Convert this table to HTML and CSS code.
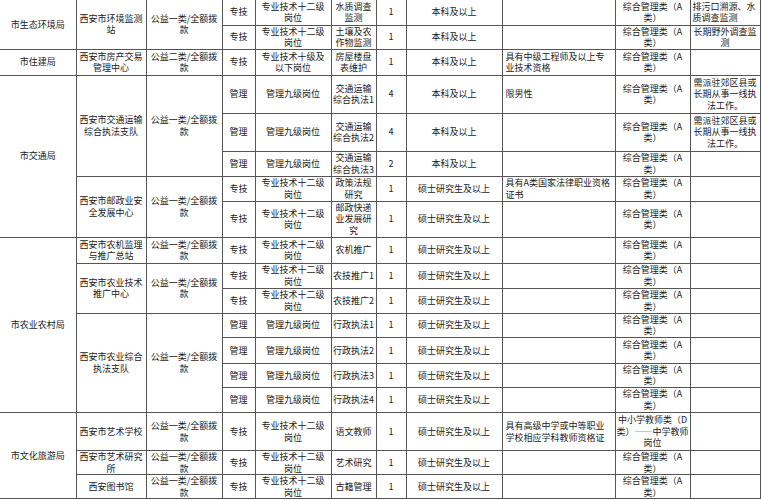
FILE: index.html
```html
<!DOCTYPE html>
<html lang="zh-CN">
<head>
<meta charset="utf-8">
<title>岗位表</title>
<link rel="stylesheet" href="styles.css">
</head>
<body>
<table class="grid">
  <colgroup>
    <col class="w-dep">
    <col class="w-unit">
    <col class="w-type">
    <col class="w-cat">
    <col class="w-level">
    <col class="w-post">
    <col class="w-num">
    <col class="w-edu">
    <col class="w-req">
    <col class="w-exam">
    <col class="w-note">
  </colgroup>
  <tbody>
    <tr class="h25">
      <td class="dep" rowspan="2">市生态环境局</td>
      <td rowspan="2">西安市环境监测站</td>
      <td rowspan="2">公益一类/全额拨款</td>
      <td>专技</td><td>专业技术十二级岗位</td><td class="post">水质调查监测</td><td>1</td><td>本科及以上</td>
      <td class="req"></td><td class="exam">综合管理类（A类）</td><td class="note left">排污口溯源、水质调查监测</td>
    </tr>
    <tr class="h24">
      <td>专技</td><td>专业技术十二级岗位</td><td class="post">土壤及农作物监测</td><td>1</td><td>本科及以上</td>
      <td class="req"></td><td class="exam">综合管理类（A类）</td><td class="note">长期野外调查监测</td>
    </tr>
    <tr class="h26">
      <td class="dep">市住建局</td>
      <td>西安市房产交易管理中心</td>
      <td>公益二类/全额拨款</td>
      <td>专技</td><td>专业技术十级及以下岗位</td><td class="post">房屋楼盘表维护</td><td>1</td><td>本科及以上</td>
      <td class="req">具有中级工程师及以上专业技术资格</td><td class="exam">综合管理类（A类）</td><td class="note"></td>
    </tr>
    <tr class="h38">
      <td class="dep" rowspan="5">市交通局</td>
      <td rowspan="3">西安市交通运输综合执法支队</td>
      <td rowspan="3">公益一类/全额拨款</td>
      <td>管理</td><td>管理九级岗位</td><td class="post">交通运输综合执法1</td><td>4</td><td>本科及以上</td>
      <td class="req">限男性</td><td class="exam">综合管理类（A类）</td><td class="note">需派驻郊区县或长期从事一线执法工作。</td>
    </tr>
    <tr class="h38">
      <td>管理</td><td>管理九级岗位</td><td class="post">交通运输综合执法2</td><td>4</td><td>本科及以上</td>
      <td class="req"></td><td class="exam">综合管理类（A类）</td><td class="note">需派驻郊区县或长期从事一线执法工作。</td>
    </tr>
    <tr class="h25">
      <td>管理</td><td>管理九级岗位</td><td class="post">交通运输综合执法3</td><td>2</td><td>本科及以上</td>
      <td class="req"></td><td class="exam">综合管理类（A类）</td><td class="note"></td>
    </tr>
    <tr class="h25">
      <td rowspan="2">西安市邮政业安全发展中心</td>
      <td rowspan="2">公益一类/全额拨款</td>
      <td>专技</td><td>专业技术十二级岗位</td><td class="post">政策法规研究</td><td>1</td><td>硕士研究生及以上</td>
      <td class="req">具有A类国家法律职业资格证书</td><td class="exam">综合管理类（A类）</td><td class="note"></td>
    </tr>
    <tr class="h36">
      <td>专技</td><td>专业技术十二级岗位</td><td class="post">邮政快递业发展研究</td><td>1</td><td>硕士研究生及以上</td>
      <td class="req"></td><td class="exam">综合管理类（A类）</td><td class="note"></td>
    </tr>
    <tr class="h26">
      <td class="dep" rowspan="7">市农业农村局</td>
      <td>西安市农机监理与推广总站</td>
      <td>公益一类/全额拨款</td>
      <td>专技</td><td>专业技术十二级岗位</td><td class="post">农机推广</td><td>1</td><td>硕士研究生及以上</td>
      <td class="req"></td><td class="exam">综合管理类（A类）</td><td class="note"></td>
    </tr>
    <tr class="h25">
      <td rowspan="2">西安市农业技术推广中心</td>
      <td rowspan="2">公益一类/全额拨款</td>
      <td>专技</td><td>专业技术十二级岗位</td><td class="post">农技推广1</td><td>1</td><td>硕士研究生及以上</td>
      <td class="req"></td><td class="exam">综合管理类（A类）</td><td class="note"></td>
    </tr>
    <tr class="h25">
      <td>专技</td><td>专业技术十二级岗位</td><td class="post">农技推广2</td><td>1</td><td>硕士研究生及以上</td>
      <td class="req"></td><td class="exam">综合管理类（A类）</td><td class="note"></td>
    </tr>
    <tr class="h24">
      <td rowspan="4">西安市农业综合执法支队</td>
      <td rowspan="4">公益一类/全额拨款</td>
      <td>管理</td><td>管理九级岗位</td><td class="post">行政执法1</td><td>1</td><td>硕士研究生及以上</td>
      <td class="req"></td><td class="exam">综合管理类（A类）</td><td class="note"></td>
    </tr>
    <tr class="h26">
      <td>管理</td><td>管理九级岗位</td><td class="post">行政执法2</td><td>1</td><td>硕士研究生及以上</td>
      <td class="req"></td><td class="exam">综合管理类（A类）</td><td class="note"></td>
    </tr>
    <tr class="h24">
      <td>管理</td><td>管理九级岗位</td><td class="post">行政执法3</td><td>1</td><td>硕士研究生及以上</td>
      <td class="req"></td><td class="exam">综合管理类（A类）</td><td class="note"></td>
    </tr>
    <tr class="h25">
      <td>管理</td><td>管理九级岗位</td><td class="post">行政执法4</td><td>1</td><td>硕士研究生及以上</td>
      <td class="req"></td><td class="exam">综合管理类（A类）</td><td class="note"></td>
    </tr>
    <tr class="h38">
      <td class="dep" rowspan="3">市文化旅游局</td>
      <td>西安市艺术学校</td>
      <td>公益一类/全额拨款</td>
      <td>专技</td><td>专业技术十二级岗位</td><td class="post">语文教师</td><td>1</td><td>硕士研究生及以上</td>
      <td class="req">具有高级中学或中等职业学校相应学科教师资格证</td><td class="exam">中小学教师类（D类）——中学教师岗位</td><td class="note"></td>
    </tr>
    <tr class="h24">
      <td>西安市艺术研究所</td>
      <td>公益一类/全额拨款</td>
      <td>专技</td><td>专业技术十二级岗位</td><td class="post">艺术研究</td><td>1</td><td>硕士研究生及以上</td>
      <td class="req"></td><td class="exam">综合管理类（A类）</td><td class="note"></td>
    </tr>
    <tr class="h24">
      <td>西安图书馆</td>
      <td>公益一类/全额拨款</td>
      <td>专技</td><td>专业技术十二级岗位</td><td class="post">古籍管理</td><td>1</td><td>硕士研究生及以上</td>
      <td class="req"></td><td class="exam">综合管理类（A类）</td><td class="note"></td>
    </tr>
  </tbody>
</table>
</body>
</html>
```
FILE: styles.css
```css
html, body {
  margin: 0;
  padding: 0;
  background: #ffffff;
}

.grid {
  border-collapse: collapse;
  table-layout: fixed;
  width: 760px;
  font-family: "Noto Sans CJK SC", "Noto Sans", sans-serif;
  font-size: 9px;
  line-height: 11.6px;
  color: #1a1a1a;
  text-spacing-trim: space-all;
}

.w-dep { width: 76px; }
.w-unit { width: 70px; }
.w-type { width: 76px; }
.w-cat { width: 33px; }
.w-level { width: 76px; }
.w-post { width: 45px; }
.w-num { width: 30px; }
.w-edu { width: 96px; }
.w-req { width: 113px; }
.w-exam { width: 75px; }
.w-note { width: 70px; }

.grid td {
  border: 1px solid #555555;
  padding: 0 2px;
  text-align: center;
  vertical-align: middle;
}

.grid tr:first-child td {
  border-top: none;
}

.grid td.dep {
  border-left: none;
}

.grid td.post {
  padding: 0 1px;
}

.grid td.req {
  text-align: left;
  padding: 0 3px;
}

.grid td.exam {
  padding: 0 0.5px;
}

.grid td.left {
  text-align: left;
}

.h24 { height: 24px; }
.h25 { height: 25px; }
.h26 { height: 26px; }
.h36 { height: 36px; }
.h38 { height: 38px; }
```
